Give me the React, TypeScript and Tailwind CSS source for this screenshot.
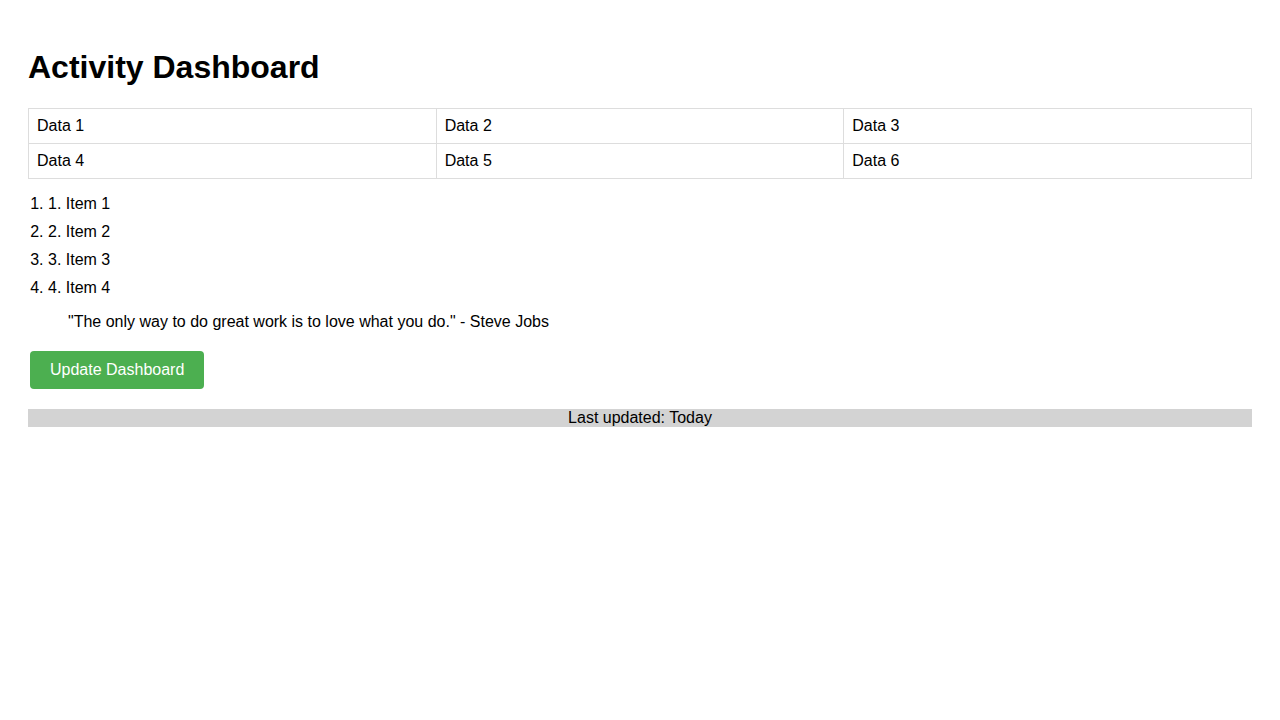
export default function App() {
  const cells = [
    ["Data 1", "Data 2", "Data 3"],
    ["Data 4", "Data 5", "Data 6"],
  ]
  const items = ["1. Item 1", "2. Item 2", "3. Item 3", "4. Item 4"]

  return (
    <div className="min-h-screen bg-white p-[28px] font-['Liberation_Sans',Arial,sans-serif] text-base leading-[18px] text-black">
      <h1 className="mt-[21px] mb-[22px] text-[32px] font-bold leading-[37px]">Activity Dashboard</h1>

      <table className="w-full border-collapse">
        <tbody>
          {cells.map((row, i) => (
            <tr key={i}>
              {row.map((cell) => (
                <td key={cell} className="w-1/3 border border-[#dddddd] p-2 text-left">
                  {cell}
                </td>
              ))}
            </tr>
          ))}
        </tbody>
      </table>

      <ol className="my-4 list-decimal pl-5">
        {items.map((item) => (
          <li key={item} className="mb-[10px] last:mb-0">
            {item}
          </li>
        ))}
      </ol>

      <blockquote className="mx-10 my-4">
        "The only way to do great work is to love what you do." - Steve Jobs
      </blockquote>

      <div className="mb-4">
        <button className="mx-[2px] mt-[4px] mb-[4px] rounded bg-[#4caf50] px-5 py-[10px] text-base leading-[18px] text-white">
          Update Dashboard
        </button>
      </div>

      <footer className="bg-[#d3d3d3] text-center">Last updated: Today</footer>
    </div>
  )
}
